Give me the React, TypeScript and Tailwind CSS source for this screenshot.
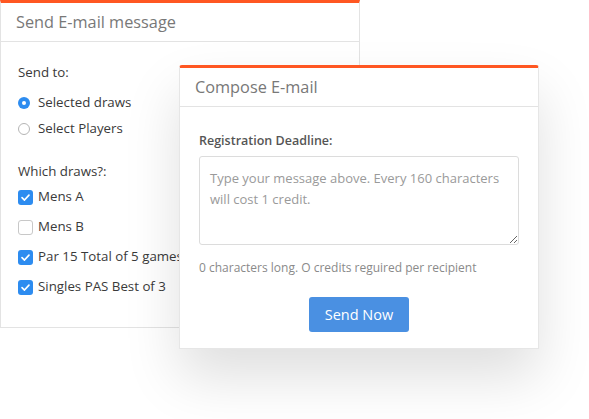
import React from 'react'

const font = { fontFamily: '"Open Sans", "Noto Sans", sans-serif' }

const Radio = ({ checked, label }: { checked?: boolean; label: string }) => (
    <div className="flex items-center gap-[8px] h-[26px]">
        {checked ? (
            <span className="w-[12px] h-[12px] rounded-full bg-[#2d8cf0] flex items-center justify-center">
                <span className="w-[4px] h-[4px] rounded-full bg-white" />
            </span>
        ) : (
            <span className="w-[12px] h-[12px] rounded-full border border-[#b5b5b5] bg-white" />
        )}
        <span className="text-[13.3px] text-[#3a3a3a]">{label}</span>
    </div>
)

const Check = ({ checked, label }: { checked?: boolean; label: string }) => (
    <div className="flex items-center gap-[5px] h-[30px] whitespace-nowrap">
        {checked ? (
            <span className="w-[15px] h-[15px] rounded-[3px] bg-[#2d8cf0] flex items-center justify-center">
                <svg width="11" height="11" viewBox="0 0 12 12" fill="none">
                    <path d="M2.2 6.2 4.9 8.8 9.8 3.4" stroke="white" strokeWidth="1.8" strokeLinecap="round" strokeLinejoin="round" />
                </svg>
            </span>
        ) : (
            <span className="w-[15px] h-[15px] rounded-[3px] border border-[#c8c8c8] bg-white" />
        )}
        <span className="text-[13.3px] text-[#3a3a3a]">{label}</span>
    </div>
)

export default function App() {
    return (
        <div className="relative w-[589px] h-[419px] bg-white overflow-hidden" style={font}>
            {/* Send E-mail message card */}
            <div className="w-[360px] h-[328px] border border-[#e3e3e3] border-t-[3px] border-t-[#ff5722] bg-white">
                <div className="h-[39px] border-b border-[#e3e3e3] pl-[15px] flex items-center">
                    <span className="text-[16.3px] text-[#787878]">Send E-mail message</span>
                </div>
                <div className="pl-[17px] pt-[21px]">
                    <div className="text-[13.3px] text-[#3a3a3a] h-[20px] flex items-center">Send to:</div>
                    <div className="mt-[7px]">
                        <Radio checked label="Selected draws" />
                        <Radio label="Select Players" />
                    </div>
                    <div className="text-[13.3px] text-[#3a3a3a] h-[20px] flex items-center mt-[20px]">Which draws?:</div>
                    <div>
                        <Check checked label="Mens A" />
                        <Check label="Mens B" />
                        <Check checked label="Par 15 Total of 5 games" />
                        <Check checked label="Singles PAS Best of 3" />
                    </div>
                </div>
            </div>

            {/* Compose E-mail modal */}
            <div className="absolute left-[179px] top-[65px] w-[360px] h-[284px] bg-white border border-[#e6e6e6] border-t-[3px] border-t-[#ff5722] rounded-t-[3px] shadow-[0_28px_55px_rgba(0,0,0,0.13)]">
                <div className="h-[39px] border-b border-[#e3e3e3] pl-[15px] flex items-center">
                    <span className="text-[16.3px] text-[#787878]">Compose E-mail</span>
                </div>
                <div className="px-[19px] pt-[24px]">
                    <div className="text-[12.5px] font-semibold text-[#555] h-[20px] flex items-center">Registration Deadline:</div>
                    <textarea
                        className="mt-[5px] block w-[320px] h-[89px] border border-[#dcdcdc] rounded-[3px] px-[10px] pt-[11px] pb-[10px] text-[13px] leading-[21px] text-[#444] placeholder:text-[#9a9a9a] outline-none"
                        placeholder="Type your message above. Every 160 characters will cost 1 credit."
                    />
                    <div className="mt-[13px] text-[12px] text-[#8a8a8a] h-[20px] flex items-center">0 characters long. O credits reguired per recipient</div>
                    <div className="flex justify-center mt-[19px]">
                        <button className="w-[100px] h-[35px] rounded-[3px] bg-[#4a90e2] text-white text-[14.5px]">Send Now</button>
                    </div>
                </div>
            </div>
        </div>
    )
}
